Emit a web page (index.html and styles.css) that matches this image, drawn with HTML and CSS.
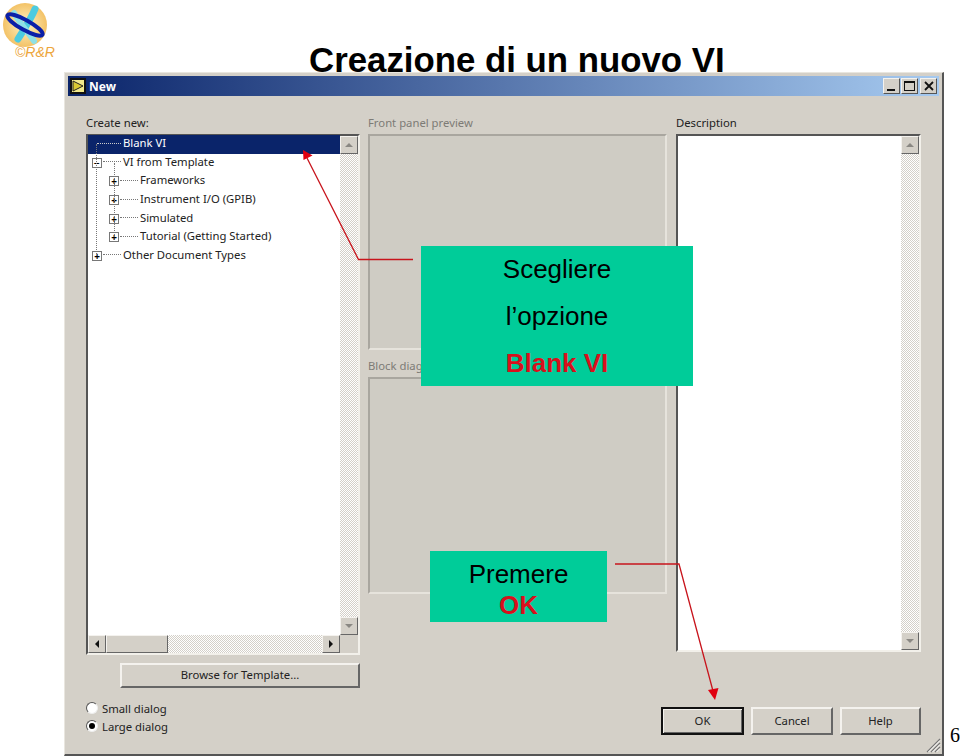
FILE: index.html
```html
<!DOCTYPE html>
<html lang="it">
<head>
<meta charset="utf-8">
<title>Creazione di un nuovo VI</title>
<link rel="stylesheet" href="styles.css">
</head>
<body>
<div class="slide">
  <header class="logo">
    <svg class="logo-mark" viewBox="0 0 50 50" width="50" height="50" aria-hidden="true">
      <defs>
        <radialGradient id="sun" cx="50%" cy="50%" r="55%">
          <stop offset="0" stop-color="#fff4c8"/>
          <stop offset="1" stop-color="#f2bd5c"/>
        </radialGradient>
      </defs>
      <circle cx="25" cy="25" r="22" fill="url(#sun)"/>
      <path d="M35 9 C31 19 26 26 18 39" stroke="#4ccbe0" stroke-width="7" fill="none" stroke-linecap="round"/>
      <path d="M14 13 C19 22 27 31 34 41" stroke="#8fe0e6" stroke-width="6" fill="none" stroke-linecap="round"/>
      <ellipse cx="25" cy="25" rx="20" ry="5" transform="rotate(29 25 25)" fill="none" stroke="#0b1fa8" stroke-width="4"/>
    </svg>
    <span class="logo-text">©R&amp;R</span>
  </header>

  <section class="window">
    <div class="titlebar">
      <svg class="app-icon" viewBox="0 0 16 16" width="16" height="16" aria-hidden="true">
        <rect width="16" height="16" fill="#111"/>
        <rect x="2" y="2" width="12" height="12" fill="#f1e98c"/>
        <path d="M3 3 L13 8 L3 13 Z" fill="#d9c933" stroke="#222" stroke-width="1"/>
      </svg>
      <span class="titlebar-text">New</span>
      <div class="caption-btns">
        <span class="caption-btn"><i class="glyph-min"></i></span>
        <span class="caption-btn"><i class="glyph-max"></i></span>
        <span class="caption-btn close">
          <svg viewBox="0 0 10 10" width="10" height="10" aria-hidden="true"><path d="M1 1 L9 9 M9 1 L1 9" stroke="#111" stroke-width="1.8"/></svg>
        </span>
      </div>
    </div>

    <div class="content">
      <div class="col col-left">
        <div class="label">Create new:</div>
        <div class="list sunken">
          <div class="list-top">
            <div class="tree">
              <span class="guide guide-root"></span>
              <span class="guide guide-child"></span>
              <div class="row selected"><span class="twisty none"></span><span class="dots"></span><span class="row-text">Blank VI</span></div>
              <div class="row"><span class="twisty">−</span><span class="dots"></span><span class="row-text">VI from Template</span></div>
              <div class="row child"><span class="twisty">+</span><span class="dots"></span><span class="row-text">Frameworks</span></div>
              <div class="row child"><span class="twisty">+</span><span class="dots"></span><span class="row-text">Instrument I/O (GPIB)</span></div>
              <div class="row child"><span class="twisty">+</span><span class="dots"></span><span class="row-text">Simulated</span></div>
              <div class="row child"><span class="twisty">+</span><span class="dots"></span><span class="row-text">Tutorial (Getting Started)</span></div>
              <div class="row"><span class="twisty">+</span><span class="dots"></span><span class="row-text">Other Document Types</span></div>
            </div>
            <div class="vscroll">
              <span class="sb-btn"><i class="tri up"></i></span>
              <span class="sb-track"></span>
              <span class="sb-btn"><i class="tri down"></i></span>
            </div>
          </div>
          <div class="hscroll">
            <span class="sb-btn"><i class="tri left"></i></span>
            <span class="sb-thumb"></span>
            <span class="sb-track"></span>
            <span class="sb-btn"><i class="tri right"></i></span>
            <span class="sb-corner"></span>
          </div>
        </div>
        <button class="btn browse">Browse for Template...</button>
        <div class="radios">
          <div class="radio"><span class="radio-dot"></span>Small dialog</div>
          <div class="radio"><span class="radio-dot on"></span>Large dialog</div>
        </div>
      </div>

      <div class="col col-mid">
        <div class="label dim">Front panel preview</div>
        <div class="preview front"></div>
        <div class="label dim second">Block diagram preview</div>
        <div class="preview block"></div>
      </div>

      <div class="col col-right">
        <div class="label">Description</div>
        <div class="desc sunken">
          <div class="desc-body"></div>
          <div class="vscroll">
            <span class="sb-btn"><i class="tri up"></i></span>
            <span class="sb-track"></span>
            <span class="sb-btn"><i class="tri down"></i></span>
          </div>
        </div>
        <div class="actions">
          <button class="btn default">OK</button>
          <button class="btn">Cancel</button>
          <button class="btn">Help</button>
        </div>
      </div>
    </div>

    <svg class="grip" viewBox="0 0 16 16" width="16" height="16" aria-hidden="true">
      <path d="M15 2 L2 15 M15 6 L6 15 M15 10 L10 15" stroke="#777" stroke-width="1.2"/>
      <path d="M15 3.5 L3.5 15 M15 7.5 L7.5 15 M15 11.5 L11.5 15" stroke="#fff" stroke-width="1"/>
    </svg>
  </section>

  <h1 class="title">Creazione di un nuovo VI</h1>

  <svg class="arrows" viewBox="0 0 960 756" width="960" height="756" aria-hidden="true">
    <path d="M413 259.500 H358.500 L307 158" fill="none" stroke="#c8141c" stroke-width="1.300"/>
    <path d="M303 150 L312.500 155.500 L303.500 160 Z" fill="#e00010"/>
    <path d="M615 564 H679 L713 691" fill="none" stroke="#c8141c" stroke-width="1.300"/>
    <path d="M715 700 L708 690 L718.500 688 Z" fill="#e00010"/>
  </svg>

  <aside class="callout choose">
    <p>Scegliere</p>
    <p>l’opzione</p>
    <p class="accent">Blank VI</p>
  </aside>

  <aside class="callout press">
    <p>Premere</p>
    <p class="accent">OK</p>
  </aside>

  <div class="page-no">6</div>
</div>
</body>
</html>
```

FILE: styles.css
```css
* { box-sizing: border-box; }

html, body {
  margin: 0;
  padding: 0;
  background: #fff;
}

.slide {
  position: relative;
  width: 960px;
  height: 756px;
  overflow: hidden;
  font-family: "Liberation Sans", Arial, sans-serif;
}

/* Logo */
.logo { position: absolute; left: 0; top: 0; width: 60px; }
.logo-mark { display: block; margin: 0; }
.logo-text {
  position: absolute;
  left: 15px;
  top: 44px;
  font-size: 14px;
  font-style: italic;
  color: #eda63c;
}

/* Title */
.title {
  position: absolute;
  left: 309px;
  top: 41px;
  margin: 0;
  font-size: 34.800px;
  line-height: 38px;
  font-weight: 700;
  color: #000;
  white-space: nowrap;
}

/* Window */
.window {
  position: absolute;
  left: 64px;
  top: 72px;
  width: 880px;
  height: 684px;
  padding: 3px 3px 0 3px;
  background: #d4d0c8;
  border-top: 1px solid #e9e6df;
  border-left: 1px solid #e9e6df;
  border-right: 2px solid #555;
  border-bottom: 2px solid #555;
  font-family: "Noto Sans", "DejaVu Sans", sans-serif;
  font-size: 11.300px;
  color: #222;
}

.titlebar {
  display: flex;
  align-items: center;
  height: 20px;
  padding: 0 2px 0 0;
  background: linear-gradient(90deg, #0a246a 0%, #a6caf0 100%);
}
.app-icon { margin-left: 2px; flex: none; }
.titlebar-text {
  margin-left: 3px;
  color: #fff;
  font-weight: 700;
  font-size: 12px;
}
.caption-btns { display: flex; margin-left: auto; }
.caption-btn {
  display: flex;
  align-items: center;
  justify-content: center;
  width: 17px;
  height: 16px;
  background: #d4d0c8;
  border: 1px solid;
  border-color: #f4f2ee #555 #555 #f4f2ee;
}
.caption-btn + .caption-btn { margin-left: 1px; }
.caption-btn.close { margin-left: 2px; }
.glyph-min { width: 8px; height: 2px; background: #111; margin-top: 8px; margin-right: 2px; }
.glyph-max { width: 11px; height: 10px; border: 1px solid #111; border-top-width: 2px; }

.content {
  display: grid;
  grid-template-columns: 274px 300px 245px;
  column-gap: 8px;
  padding: 21px 0 0 18px;
}

.col { display: flex; flex-direction: column; min-width: 0; }

.label { height: 17px; line-height: 12px; white-space: nowrap; }
.label.dim { color: #7d7b76; }
.label.second { margin-top: 10px; }

/* Sunken fields */
.sunken {
  background: #fff;
  border: 2px solid;
  border-color: #555 #f2f0ea #f2f0ea #555;
}

.list { height: 521px; display: flex; flex-direction: column; }
.list-top { flex: 1; display: flex; min-height: 0; }

.tree { position: relative; flex: 1; min-width: 0; margin-top: -1px; }
.guide { position: absolute; z-index: 1; border-left: 1px dotted #777; }
.guide-root { left: 8px; top: 9px; height: 112px; }
.guide-child { left: 26px; top: 28px; height: 74px; }

.row {
  position: relative;
  display: flex;
  align-items: center;
  height: 18.600px;
  padding-left: 4px;
  white-space: nowrap;
}
.row.child { padding-left: 21px; }
.row.selected { background: #0a246a; color: #fff; }
.row.selected .dots { border-color: #ccc; margin-left: -5px; width: 24px; }

.twisty {
  flex: none;
  display: flex;
  align-items: center;
  justify-content: center;
  width: 10px;
  height: 10px;
  background: #fff;
  border: 1px solid #777;
  font-size: 10px;
  line-height: 1;
  font-weight: 700;
  color: #000;
}
.twisty.none { visibility: hidden; }
.dots { flex: none; width: 18px; border-top: 1px dotted #777; margin: 0 0 2px 1px; }
.row-text { margin-left: 2px; margin-bottom: 3px; }

/* Scrollbars */
.vscroll { flex: none; width: 18px; display: flex; flex-direction: column; background: #d4d0c8; }
.hscroll { flex: none; height: 18px; display: flex; background: #d4d0c8; }
.sb-track {
  flex: 1;
  background-color: #f4f3f0;
  background-image: repeating-conic-gradient(#d4d0c8 0 25%, #fff 0 50%);
  background-size: 2px 2px;
}
.sb-btn {
  flex: none;
  display: flex;
  align-items: center;
  justify-content: center;
  width: 18px;
  height: 18px;
  background: #d4d0c8;
  border: 1px solid;
  border-color: #f4f2ee #666 #666 #f4f2ee;
}
.sb-thumb {
  flex: none;
  width: 62px;
  background: #d4d0c8;
  border: 1px solid;
  border-color: #f4f2ee #666 #666 #f4f2ee;
}
.sb-corner { flex: none; width: 18px; background: #d4d0c8; }

.tri { width: 0; height: 0; border-style: solid; border-color: transparent; }
.tri.up { border-width: 0 4px 4px; border-bottom-color: #8a8883; }
.tri.down { border-width: 4px 4px 0; border-top-color: #8a8883; }
.tri.left { border-width: 4px 4px 4px 0; border-right-color: #111; }
.tri.right { border-width: 4px 0 4px 4px; border-left-color: #111; }

/* Buttons */
.btn {
  display: block;
  padding: 0 0 2px;
  background: #d4d0c8;
  border: 2px solid;
  border-color: #f4f2ee #666 #666 #f4f2ee;
  font: inherit;
  color: #222;
  text-align: center;
}
.browse { align-self: flex-end; width: 240px; height: 25px; margin-top: 8px; }

.radios { margin-top: 11px; }
.radio { display: flex; align-items: center; height: 18px; white-space: nowrap; }
.radio-dot {
  position: relative;
  flex: none;
  width: 12px;
  height: 12px;
  margin-right: 4px;
  background: #fff;
  border-radius: 50%;
  border: 1px solid;
  border-color: #555 #eee #eee #555;
}
.radio-dot.on::after {
  content: "";
  position: absolute;
  left: 2px;
  top: 2px;
  width: 6px;
  height: 6px;
  border-radius: 50%;
  background: #000;
}

/* Previews */
.preview {
  margin-right: 1px;
  background: #cfccc4;
  border: 2px solid;
  border-color: #a9a69f #e6e3dc #e6e3dc #a9a69f;
}
.preview.front { height: 216px; }
.preview.block { height: 217px; }

/* Description */
.desc { height: 518px; display: flex; }
.desc-body { flex: 1; }
.actions {
  display: grid;
  grid-template-columns: 83px 82px 81px;
  column-gap: 7px;
  margin: 55px 0 0 -15px;
}
.actions .btn { height: 28px; }
.btn.default { border-color: #111; box-shadow: inset 1px 1px 0 #f4f2ee, inset -1px -1px 0 #666; }

.grip { position: absolute; right: 1px; bottom: 1px; }

/* Annotations */
.arrows { position: absolute; left: 0; top: 0; }

.callout {
  position: absolute;
  background: #00cc99;
  color: #000;
  text-align: center;
  font-family: "Liberation Sans", Arial, sans-serif;
  font-size: 26px;
}
.callout p { margin: 0; }
.accent { color: #d8101c; font-weight: 700; }

.choose { left: 421px; top: 246px; width: 272px; height: 140px; line-height: 47px; }
.press { left: 430px; top: 551px; width: 177px; height: 71px; padding-top: 8px; line-height: 31px; }

.page-no {
  position: absolute;
  left: 950px;
  top: 724px;
  font-family: "Liberation Serif", "Times New Roman", serif;
  font-size: 20px;
  line-height: 23px;
  color: #000;
}
```
